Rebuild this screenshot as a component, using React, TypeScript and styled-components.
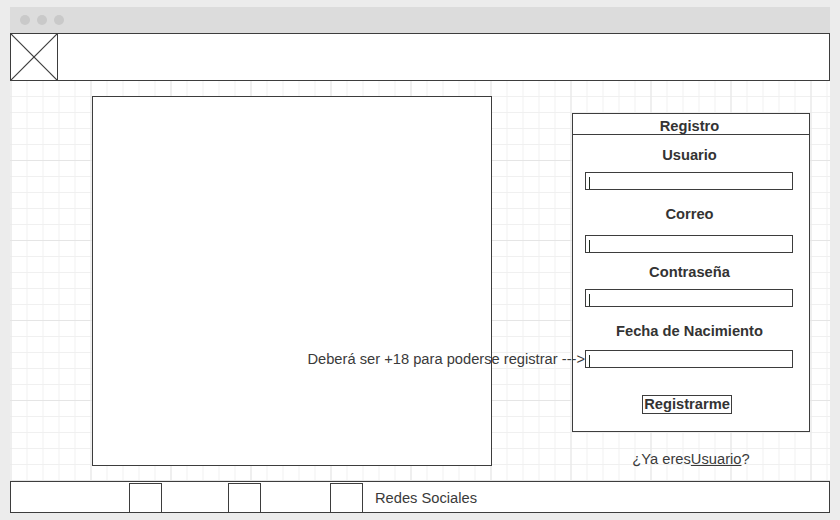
import React from "react";
import styled, { createGlobalStyle } from "styled-components";

const Global = createGlobalStyle`
  html, body { margin: 0; padding: 0; background: #ececec; }
  body { font-family: "Liberation Sans", Arial, sans-serif; color: #333; }
  * { box-sizing: border-box; }
`;

const LINE = "#3d3d3d";
const FS = "14.7px";

const Window = styled.div`
  margin: 7px 0 0 10px;
  width: 820px;
  height: 506px;
  display: flex;
  flex-direction: column;
  background: #fff;
`;

const TitleBar = styled.div`
  height: 26px;
  background: #dcdcdc;
  display: flex;
  align-items: center;
  gap: 7px;
  padding-left: 10px;
`;

const Dot = styled.span`
  width: 10px;
  height: 10px;
  border-radius: 50%;
  background: #c9c9c9;
`;

const Header = styled.header`
  height: 48px;
  border: 1px solid ${LINE};
  display: flex;
  background: #fff;
`;

const Logo = styled.div`
  width: 47px;
  height: 100%;
  border-right: 1px solid ${LINE};
  display: flex;
`;

const Main = styled.main`
  flex: 1;
  display: flex;
  align-items: flex-start;
  padding: 15px 0 0 82px;
  background-color: #fff;
  background-image:
    linear-gradient(to right, #e5e5e5 1px, transparent 1px),
    linear-gradient(to bottom, #e5e5e5 1px, transparent 1px),
    linear-gradient(to right, #f0f0f0 1px, transparent 1px),
    linear-gradient(to bottom, #f0f0f0 1px, transparent 1px);
  background-size: 80px 80px, 80px 80px, 16px 16px, 16px 16px;
  background-position: 0.5px 0, 0 -1px, 0.5px 0, 0 -1px;
`;

const ImageBox = styled.div`
  width: 400px;
  height: 370px;
  border: 1px solid ${LINE};
  background: #fff;
`;

const Side = styled.div`
  margin: 17px 0 0 80px;
  width: 238px;
  display: flex;
  flex-direction: column;
  align-items: center;
`;

const Panel = styled.section`
  width: 238px;
  border: 1px solid ${LINE};
  background: #fff;
  display: flex;
  flex-direction: column;
  padding-bottom: 17px;
`;

const PanelTitle = styled.div`
  height: 21px;
  border-bottom: 1px solid ${LINE};
  font-weight: bold;
  font-size: ${FS};
  line-height: 17px;
  padding: 4px 3px 0 0;
  text-align: center;
`;

const Label = styled.div<{ $mt: number }>`
  margin-top: ${(p) => p.$mt}px;
  font-weight: bold;
  font-size: ${FS};
  line-height: 17px;
  text-align: center;
  padding-right: 3px;
`;

const InputWrap = styled.div<{ $mt: number }>`
  position: relative;
  margin: ${(p) => p.$mt}px 0 0 12px;
  width: 208px;
  height: 18px;
  border: 1px solid ${LINE};
  background: #fff;
`;

const Caret = styled.span`
  position: absolute;
  left: 3px;
  bottom: 0;
  width: 1px;
  height: 12px;
  background: #1e2a1e;
`;

const Note = styled.span`
  position: absolute;
  right: calc(100% + 1px);
  top: 0;
  white-space: nowrap;
  font-size: ${FS};
  line-height: 17px;
  color: #3a3a3a;
`;

const Button = styled.button`
  margin: 27px auto 0;
  padding: 0 1px;
  height: 19px;
  border: 1px solid ${LINE};
  background: #fff;
  font-family: "Liberation Sans", Arial, sans-serif;
  font-weight: bold;
  font-size: ${FS};
  line-height: 17px;
  color: #333;
  transform: translateX(-4px);
`;

const Already = styled.p`
  margin: 19px 0 0;
  font-size: ${FS};
  line-height: 17px;
  color: #3a3a3a;
`;

const UserLink = styled.span`
  text-decoration: underline;
`;

const Footer = styled.footer`
  height: 32px;
  border: 1px solid ${LINE};
  display: flex;
  align-items: stretch;
  padding-left: 118px;
  background: #fff;
`;

const Square = styled.div<{ $ml: number }>`
  margin-left: ${(p) => p.$ml}px;
  width: 33px;
  border: 1px solid ${LINE};
  border-bottom: none;
  margin-top: 1px;
`;

const FooterText = styled.span`
  margin-left: 12px;
  padding-top: 1px;
  font-size: ${FS};
  line-height: 30px;
  color: #3a3a3a;
`;

const fields = [
  { label: "Usuario", mt: 12, gap: 8 },
  { label: "Correo", mt: 16, gap: 12 },
  { label: "Contraseña", mt: 11, gap: 8 },
  { label: "Fecha de Nacimiento", mt: 16, gap: 10, note: "Deberá ser +18 para poderse registrar --->" },
];

export default function App() {
  return (
    <>
      <Global />
      <Window>
        <TitleBar>
          <Dot />
          <Dot />
          <Dot />
        </TitleBar>
        <Header>
          <Logo>
            <svg width="46" height="46" viewBox="0 0 46 46">
              <line x1="0" y1="0" x2="46" y2="46" stroke={LINE} strokeWidth="1.2" />
              <line x1="46" y1="0" x2="0" y2="46" stroke={LINE} strokeWidth="1.2" />
            </svg>
          </Logo>
        </Header>
        <Main>
          <ImageBox />
          <Side>
            <Panel>
              <PanelTitle>Registro</PanelTitle>
              {fields.map((f) => (
                <React.Fragment key={f.label}>
                  <Label $mt={f.mt}>{f.label}</Label>
                  <InputWrap $mt={f.gap}>
                    {f.note && <Note>{f.note}</Note>}
                    <Caret />
                  </InputWrap>
                </React.Fragment>
              ))}
              <Button>Registrarme</Button>
            </Panel>
            <Already>
              ¿Ya eres<UserLink>Usuario</UserLink>?
            </Already>
          </Side>
        </Main>
        <Footer>
          <Square $ml={0} />
          <Square $ml={66} />
          <Square $ml={69} />
          <FooterText>Redes Sociales</FooterText>
        </Footer>
      </Window>
    </>
  );
}
